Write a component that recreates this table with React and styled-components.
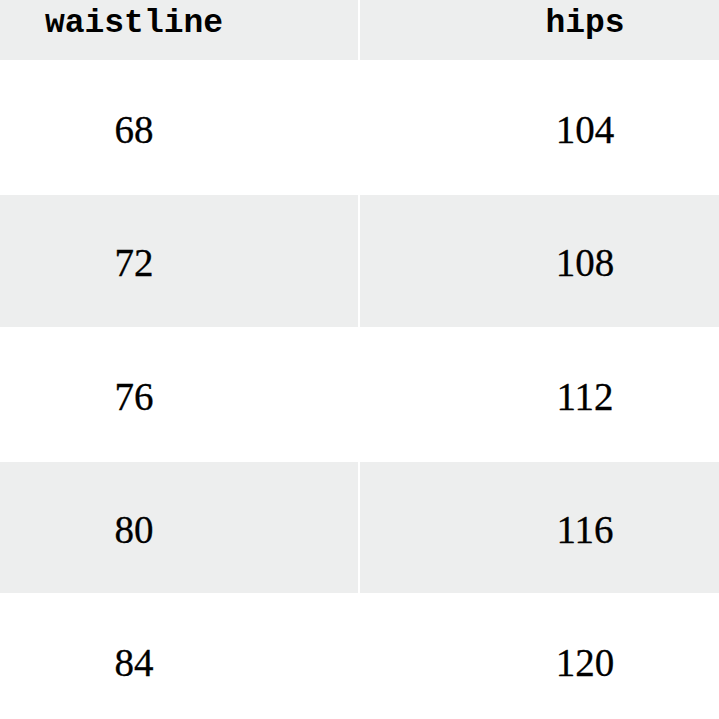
import React from "react";
import styled, { createGlobalStyle } from "styled-components";

const Global = createGlobalStyle`
  html, body { margin: 0; padding: 0; background: #ffffff; overflow: hidden; }
  body { width: 719px; height: 719px; }
`;

const Viewport = styled.div`
  width: 719px;
  height: 719px;
  overflow: hidden;
  background: #ffffff;
`;

const Table = styled.div`
  margin-left: -90px;
  width: 900px;
  display: flex;
  flex-direction: column;
`;

const Row = styled.div`
  display: grid;
  grid-template-columns: 448px 450px;
  column-gap: 2px;
  height: ${(p) => p.$h}px;
`;

const Cell = styled.div`
  background: ${(p) => (p.$shaded ? "#edeeee" : "#ffffff")};
  display: flex;
  justify-content: center;
  align-items: center;
  padding-top: 3px;
  box-sizing: border-box;
  font-family: "Liberation Serif", "Times New Roman", serif;
  font-size: 39px;
  color: #000;
  -webkit-text-stroke: 0.3px #000;
`;

const HeadCell = styled.div`
  background: #edeeee;
  display: flex;
  justify-content: center;
  align-items: flex-start;
  padding-top: 4px;
  box-sizing: border-box;
  font-family: "Liberation Mono", "Courier New", monospace;
  font-weight: bold;
  font-size: 33px;
  line-height: 40px;
  color: #000;
`;

const rows = [
  { w: "68", h: "104", height: 135 },
  { w: "72", h: "108", height: 132 },
  { w: "76", h: "112", height: 135 },
  { w: "80", h: "116", height: 131 },
  { w: "84", h: "120", height: 135 },
];

export default function App() {
  return (
    <>
      <Global />
      <Viewport>
        <Table>
          <Row $h={60}>
            <HeadCell>waistline</HeadCell>
            <HeadCell>hips</HeadCell>
          </Row>
          {rows.map((r, i) => (
            <Row key={r.w} $h={r.height}>
              <Cell $shaded={i % 2 === 1}>{r.w}</Cell>
              <Cell $shaded={i % 2 === 1}>{r.h}</Cell>
            </Row>
          ))}
        </Table>
      </Viewport>
    </>
  );
}
